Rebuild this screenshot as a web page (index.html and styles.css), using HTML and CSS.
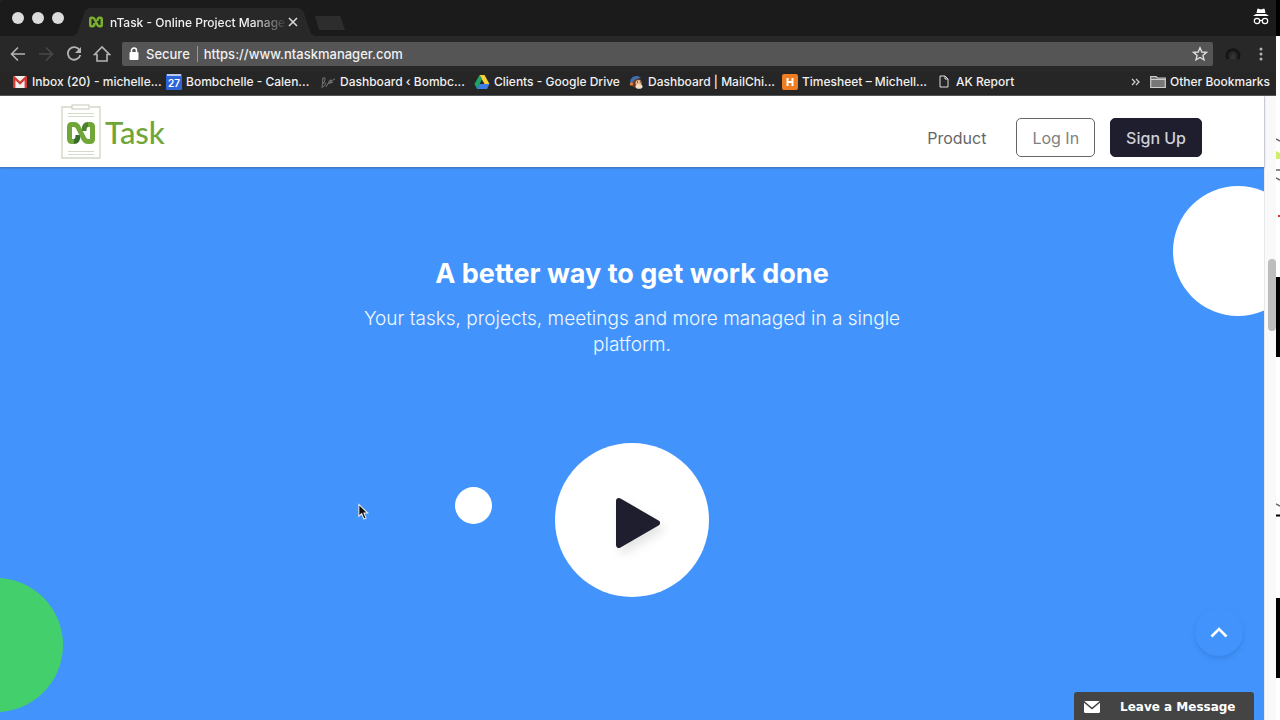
FILE: index.html
```html
<!DOCTYPE html>
<html lang="en">
<head>
<meta charset="utf-8">
<meta name="viewport" content="width=device-width, initial-scale=1">
<title>nTask - Online Project Management</title>
<link rel="stylesheet" href="styles.css">
</head>
<body>
<div class="desktop">
  <div class="window">
    <div class="tabstrip">
      <div class="lights"><span></span><span></span><span></span></div>
      <div class="tab">
        <svg class="tab-icon" width="14" height="12" viewBox="6 17.500 28 23" fill="none" stroke="#79b02c" stroke-width="5"><path d="M17 31Q17 37.500 13 37.500H11Q8.500 37.500 8.500 35V23Q8.500 20.500 11 20.500H13Q16 20.500 17.500 24L22.500 34Q24 37.500 27 37.500H29Q31.500 37.500 31.500 35V23Q31.500 20.500 29 20.500H27Q23 20.500 23 27"/></svg>
        <span class="tab-title">nTask - Online Project Manage</span>
        <button class="tab-close" aria-label="Close tab"><svg width="10" height="10" viewBox="0 0 10 10" stroke="#ddd" stroke-width="1.500"><path d="M1 1L9 9M9 1L1 9"/></svg></button>
      </div>
      <button class="new-tab" aria-label="New tab"></button>
      <svg class="incognito" width="18" height="18" viewBox="0 0 18 18" fill="#fff"><path d="M5.300 1.200Q5.600.3 6.500.7L9 1.500 11.500.7Q12.300.4 12.700 1.200L13.500 5H4.500ZM4 5.900H14L17 8H1Z"/><g fill="none" stroke="#fff" stroke-width="1.200"><circle cx="5" cy="13" r="2.700"/><circle cx="13" cy="13" r="2.700"/><path d="M7.700 12.700Q9 11.900 10.300 12.700"/></g></svg>
    </div>

    <div class="toolbar">
      <button class="nav" aria-label="Back"><svg width="16" height="16" viewBox="0 0 16 16" fill="none" stroke="#b4b4b4" stroke-width="1.600"><path d="M15 8H2M8 1.500L1.500 8 8 14.500"/></svg></button>
      <button class="nav" aria-label="Forward" disabled><svg width="16" height="16" viewBox="0 0 16 16" fill="none" stroke="#484848" stroke-width="1.600"><path d="M1 8H14M8 1.500L14.500 8 8 14.500"/></svg></button>
      <button class="nav" aria-label="Reload"><svg width="16" height="16" viewBox="0 0 16 16" fill="none" stroke="#b4b4b4" stroke-width="1.800"><path d="M13.500 4A6.300 6.300 0 1 0 14.300 9"/><path d="M15 1V7H9Z" fill="#b4b4b4" stroke="none"/></svg></button>
      <button class="nav" aria-label="Home"><svg width="18" height="18" viewBox="0 0 18 18" fill="none" stroke="#b4b4b4" stroke-width="1.600"><path d="M1.500 9.500L9 2 16.500 9.500H14V16H4V9.500Z"/></svg></button>
      <div class="address">
        <svg width="10" height="14" viewBox="0 0 10 14"><rect x="0.500" y="5" width="9" height="8" rx="1" fill="#fff"/><path d="M2.500 5.500V3.500A2.500 2.500 0 0 1 7.500 3.500V5.500" fill="none" stroke="#fff" stroke-width="1.500"/></svg>
        <span class="secure">Secure</span>
        <input class="url" type="text" aria-label="Address" value="https://www.ntaskmanager.com">
        <button class="star" aria-label="Bookmark this page"><svg width="16" height="16" viewBox="0 0 16 16" fill="none" stroke="#ddd" stroke-width="1.400"><path d="M8 1.800L9.800 6 14.400 6.400 10.900 9.400 12 13.900 8 11.500 4 13.900 5.100 9.400 1.600 6.400 6.200 6Z"/></svg></button>
      </div>
      <button class="ext" aria-label="Extension"><svg width="16" height="14" viewBox="0 0 16 14"><path d="M3 12A6 6 0 1 1 13 12" fill="none" stroke="#151515" stroke-width="3"/><path d="M6 9L8 6 10 9V12H6Z" fill="#353535"/></svg></button>
      <button class="menu" aria-label="Menu"><svg width="4" height="14" viewBox="0 0 4 14" fill="#b4b4b4"><circle cx="2" cy="2" r="1.500"/><circle cx="2" cy="7" r="1.500"/><circle cx="2" cy="12" r="1.500"/></svg></button>
    </div>

    <nav class="bookmarks" aria-label="Bookmarks">
      <a class="bookmark" href="#"><svg width="14" height="12" viewBox="0 0 14 12"><rect width="14" height="12" rx="1" fill="#f3eeee"/><path d="M1.200 12V1.500L7 7 12.800 1.500V12" fill="none" stroke="#d03a32" stroke-width="2.400"/></svg><span>Inbox (20) - michelle...</span></a>
      <a class="bookmark" href="#"><svg width="16" height="16" viewBox="0 0 16 16"><rect width="16" height="16" rx="1" fill="#2f63d8"/><rect x="1" width="14" height="2" fill="#b9c8ee"/><text x="8" y="13" text-anchor="middle" class="cal-num">27</text></svg><span>Bombchelle - Calen...</span></a>
      <a class="bookmark" href="#"><svg width="14" height="14" viewBox="0 0 14 14" fill="none" stroke="#737373"><path d="M2 3L1 13M1 4Q4 1 4 4T2 8Q6 7 4 10T1 11M5 12L9 5Q11 4 10 7T7 8L12 5 14 4M9 8L12 7"/></svg><span>Dashboard ‹ Bombc...</span></a>
      <a class="bookmark" href="#"><svg width="15" height="14" viewBox="0 0 15 14"><path d="M5 0H10L15 9H10Z" fill="#f9cf3c"/><path d="M5 0L7.500 4.500 2.500 14 0 9Z" fill="#20a464"/><path d="M5 9H15L12.500 14H2.500Z" fill="#3c7de6"/></svg><span>Clients - Google Drive</span></a>
      <a class="bookmark" href="#"><svg width="14" height="14" viewBox="0 0 14 14"><circle cx="7.500" cy="8" r="5" fill="#6b3a22"/><path d="M1 7Q2 0 9 1L12 3Q5 3 3 9Z" fill="#3f6fb0"/><circle cx="9.500" cy="8" r="3" fill="#edb98f"/><circle cx="2.500" cy="9" r="1.800" fill="#df7a3a"/><ellipse cx="10" cy="11.500" rx="3.500" ry="2.300" fill="#f4dfc5"/><path d="M8 7H9M11 7H12" stroke="#2b1b14"/></svg><span>Dashboard | MailChi...</span></a>
      <a class="bookmark" href="#"><svg width="16" height="16" viewBox="0 0 16 16"><rect width="16" height="16" rx="2" fill="#ef7d22"/><path d="M5.500 4V12M10.500 4V12M5.500 8H10.500" stroke="#fff" stroke-width="2"/></svg><span>Timesheet – Michell...</span></a>
      <a class="bookmark" href="#"><svg width="10" height="13" viewBox="0 0 10 13" fill="none" stroke="#ddd"><path d="M1 1H6L9 4V12H1ZM6 1V4H9"/></svg><span>AK Report</span></a>
      <button class="more" aria-label="More bookmarks"><svg width="9" height="8" viewBox="0 0 9 8" fill="none" stroke="#ccc" stroke-width="1.300"><path d="M1 1L4 4 1 7M5 1L8 4 5 7"/></svg></button>
      <a class="other" href="#"><svg width="16" height="14" viewBox="0 0 16 14"><path d="M.7 12.500V1.500H6L7.500 3H15.300V12.500Z" fill="#777" stroke="#ccc" stroke-width="1.200"/><path d="M1 4.500H15" stroke="#ccc"/></svg><span>Other Bookmarks</span></a>
    </nav>

    <div class="viewport">
      <div class="page">
        <header class="site-header">
          <a class="logo" href="#" aria-label="nTask">
            <svg width="40" height="55" viewBox="0 0 40 55" fill="none">
              <path d="M11 3H1V54H39V3H29" stroke="#d2d7c8" stroke-width="1.400"/>
              <rect x="11" y="1" width="17" height="4" stroke="#c3cab6"/>
              <path d="M7 9.500H33M7 12.500H33M7 47.500H33M7 50.500H33" stroke="#d3dcc8"/>
              <path d="M17 31Q17 37.500 13 37.500" stroke="#386c2c" stroke-width="5"/>
              <path d="M27 20.500Q23 20.500 23 27" stroke="#4a8230" stroke-width="5"/>
              <path d="M13 37.500H11Q8.500 37.500 8.500 35V23Q8.500 20.500 11 20.500H13Q16 20.500 17.500 24L22.500 34Q24 37.500 27 37.500H29Q31.500 37.500 31.500 35V23Q31.500 20.500 29 20.500H27" stroke="#70a638" stroke-width="5"/>
            </svg>
            <span class="logo-text">Task</span>
          </a>
          <nav class="site-nav">
            <a class="product" href="#">Product</a>
            <button class="btn">Log In</button>
            <button class="btn btn-dark">Sign Up</button>
          </nav>
        </header>
        <main class="hero">
          <h1>A better way to get work done</h1>
          <p>Your tasks, projects, meetings and more managed in a single platform.</p>
          <button class="play" aria-label="Play video"><svg width="48" height="54" viewBox="0 0 48 54"><path d="M5 5L43 27 5 49Z" fill="#1e1e2e" stroke="#1e1e2e" stroke-width="6" stroke-linejoin="round"/></svg></button>
          <span class="dot dot-right"></span>
          <span class="dot dot-small"></span>
          <span class="dot dot-green"></span>
          <button class="to-top" aria-label="Back to top"><svg width="18" height="11" viewBox="0 0 18 11" fill="none" stroke="#fff" stroke-width="2.600"><path d="M1.500 9.500L9 2 16.500 9.500"/></svg></button>
          <button class="chat"><svg width="16" height="12" viewBox="0 0 16 12"><path d="M0 1.500Q0 0 1.500 0H14.500Q16 0 16 1.500V10.500Q16 12 14.500 12H1.500Q0 12 0 10.500Z" fill="#fff"/><path d="M0 .8L8 7.500 16 .8" fill="none" stroke="#444" stroke-width="1.600"/></svg><span>Leave a Message</span></button>
          <svg class="cursor" width="11" height="18" viewBox="0 0 13 20"><path d="M1 1V15L4.300 12 7 18.300 9.500 17.200 7 11.200H11.500Z" fill="#111" stroke="#eee" stroke-width="1.200"/></svg>
        </main>
      </div>
      <div class="scrollbar"><span class="thumb"></span></div>
    </div>
  </div>
  <div class="behind" aria-hidden="true">
    <svg width="4" height="720" viewBox="0 0 4 720"><path d="M0 0H4V36H0ZM0 277H4V357H0ZM0 598H4V678H0Z" fill="#000"/><path d="M0 151L4 153V159H0Z" fill="#cdf06a"/><path d="M0 139L4 141M0 170H4M0 178L4 180M0 504L4 506" stroke="#666" stroke-width="1.500"/><path d="M0 515.500H4" stroke="#000" stroke-width="2"/><path d="M2 216H4" stroke="#d33" stroke-width="2"/></svg>
  </div>
</div>
</body>
</html>
```
FILE: styles.css
```css
* { box-sizing: border-box; }
html, body { height: 100%; }
body {
  margin: 0;
  font-family: Inter, Roboto, "Liberation Sans", sans-serif;
  font-size: 13px;
  font-weight: 500;
  color: #f0f0f0;
}
button { border: 0; padding: 0; background: none; font: inherit; color: inherit; }
a { color: inherit; text-decoration: none; }
svg { display: block; flex: none; }

.desktop { display: flex; min-height: 100vh; background: #fff; }
.window { flex: 1; min-width: 0; display: flex; flex-direction: column; background: #262626; }
.behind { width: 4px; }

.tabstrip { display: flex; align-items: flex-end; height: 36px; padding-right: 6px; background: #1b1b1b; border-top-left-radius: 4px; }
.lights { display: flex; gap: 8px; padding: 0 9px 12px 12px; }
.lights span { width: 12px; height: 12px; border-radius: 50%; background: #dcdcdc; }
.tab {
  display: flex; align-items: center; width: 242px; height: 28px;
  padding: 0 17px 0 16px; background: #282828;
  clip-path: polygon(0 100%, 4px 92%, 12px 8%, 16px 0, 226px 0, 230px 8%, 238px 92%, 100% 100%);
}
.tab-title {
  flex: 1; margin-left: 7px; white-space: nowrap; font-size: 12px;
  -webkit-mask-image: linear-gradient(to right, #000 80%, transparent);
  mask-image: linear-gradient(to right, #000 80%, transparent);
}
.new-tab { width: 30px; height: 14px; margin-bottom: 6px; background: #2d2d2d; clip-path: polygon(0 0, 84% 0, 100% 100%, 14% 100%); }
.incognito { margin: 0 0 10px auto; }

.toolbar { display: flex; align-items: center; height: 36px; padding: 0 13px 0 4px; background: #282828; }
.nav { display: grid; place-items: center; width: 28px; height: 28px; }
.address { flex: 1; display: flex; align-items: center; height: 24px; margin-left: 6px; padding: 0 5px 0 7px; border-radius: 2px; background: #555; font-size: 13px; }
.secure { margin: 0 6px 0 7px; padding-right: 7px; border-right: 1px solid #999; }
.url { flex: 1; min-width: 0; border: 0; padding: 0; background: none; color: #f0f0f0; font: inherit; }
.ext { margin: 0 18px 0 12px; }

.bookmarks { display: flex; align-items: center; height: 24px; padding: 0 6px 4px 12px; background: #262626; border-bottom: 1px solid #555; font-size: 12px; white-space: nowrap; }
.bookmark { display: flex; align-items: center; gap: 4px; width: 154px; }
.bookmark svg { width: 16px; }
.cal-num { font-size: 10px; font-weight: 600; fill: #fff; }
.more { margin: 0 10px 0 auto; }
.other { display: flex; align-items: center; gap: 4px; }

.viewport { flex: 1; display: flex; background: #fff; }
.page { flex: 1; min-width: 0; display: flex; flex-direction: column; font-family: Inter, "Open Sans", sans-serif; }
.scrollbar { width: 12px; padding: 163px 0 0 3px; background: #faf9fa; border-left: 1px solid #e8e8ec; }
.thumb { display: block; height: 72px; border-radius: 4px; background: #bdbdbd; }

.site-header { position: relative; z-index: 1; display: flex; align-items: center; justify-content: space-between; height: 71px; padding: 0 62px 0 61px; background: #fff; box-shadow: 0 1px 2px rgba(60, 80, 110, 0.6); }
.logo { display: flex; align-items: center; gap: 4px; color: #70a638; }
.logo-text { font-family: Lato, sans-serif; font-size: 31px; line-height: 32px; font-weight: 500; }
.site-nav { display: flex; align-items: center; padding-top: 12px; font-size: 16px; font-weight: 400; color: #666; }
.product { margin-right: 30px; }
.btn { height: 39px; padding: 0 15px; border: 1px solid #666; border-radius: 5px; color: #808080; background: #fff; }
.btn-dark { margin-left: 15px; border-color: #1e1e2e; background: #1e1e2e; color: #d0d0d8; font-weight: 500; }

.hero { position: relative; flex: 1; display: flex; flex-direction: column; align-items: center; padding-top: 91px; overflow: hidden; background: #4294fc; text-align: center; }
h1 { margin: 0; font-size: 27px; line-height: 32px; font-weight: 700; color: #fff; }
p { max-width: 570px; margin: 16px 0 0; font-size: 19px; line-height: 26px; font-weight: 300; color: #f0f7ff; }
.play { display: grid; place-items: center; width: 154px; height: 154px; margin-top: 85px; padding: 6px 0 0 12px; border-radius: 50%; background: #fff; }
.play svg { filter: drop-shadow(4px 6px 5px rgba(0, 0, 0, 0.1)); }
.dot { position: absolute; border-radius: 50%; background: #fff; }
.dot-right { right: -39px; top: 19px; width: 130px; height: 130px; }
.dot-small { left: calc(50% - 177px); top: 320px; width: 37px; height: 37px; }
.dot-green { left: -71px; top: 411px; width: 134px; height: 134px; background: #43cf6c; }
.to-top { position: absolute; right: 21px; bottom: 64px; display: grid; place-items: center; width: 48px; height: 48px; border-radius: 50%; background: #4294fc; box-shadow: 0 3px 5px rgba(20, 70, 150, 0.2); }
.chat { position: absolute; right: 10px; bottom: 0; display: flex; align-items: center; gap: 20px; width: 180px; height: 28px; padding: 2px 0 0 10px; border-radius: 3px 3px 0 0; background: #444; color: #fff; font-family: "DejaVu Sans", sans-serif; font-size: 12px; font-weight: 700; }
.cursor { position: absolute; left: 358px; top: 336px; }
```
